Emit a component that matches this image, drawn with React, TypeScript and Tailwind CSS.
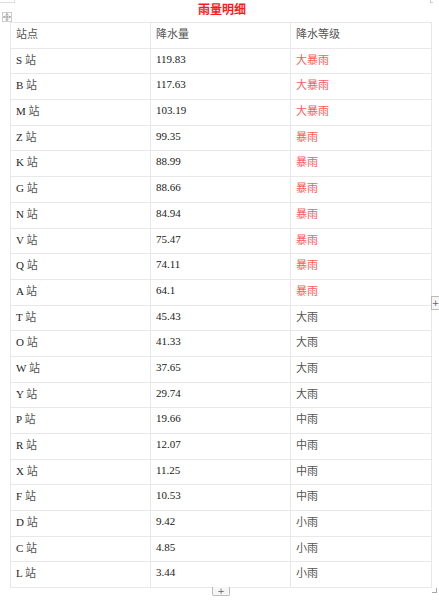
const rows: [string, string, string][] = [
  ["S", "119.83", "大暴雨"],
  ["B", "117.63", "大暴雨"],
  ["M", "103.19", "大暴雨"],
  ["Z", "99.35", "暴雨"],
  ["K", "88.99", "暴雨"],
  ["G", "88.66", "暴雨"],
  ["N", "84.94", "暴雨"],
  ["V", "75.47", "暴雨"],
  ["Q", "74.11", "暴雨"],
  ["A", "64.1", "暴雨"],
  ["T", "45.43", "大雨"],
  ["O", "41.33", "大雨"],
  ["W", "37.65", "大雨"],
  ["Y", "29.74", "大雨"],
  ["P", "19.66", "中雨"],
  ["R", "12.07", "中雨"],
  ["X", "11.25", "中雨"],
  ["F", "10.53", "中雨"],
  ["D", "9.42", "小雨"],
  ["C", "4.85", "小雨"],
  ["L", "3.44", "小雨"],
];

const serif = "font-['Liberation_Serif','Noto_Sans_CJK_SC',serif]";
const cjk = "font-['Noto_Sans_CJK_SC',sans-serif]";

function MoveIcon() {
  return (
    <svg width="10" height="10" viewBox="0 0 10 10" className="block">
      <rect x="0.5" y="0.5" width="9" height="9" fill="#fff" stroke="#ccc" />
      <path d="M5 1.5v7M1.5 5h7" stroke="#888" strokeWidth="0.8" />
      <path d="M5 1.5l-1.3 1.3M5 1.5l1.3 1.3M5 8.5l-1.3-1.3M5 8.5l1.3-1.3M1.5 5l1.3-1.3M1.5 5l1.3 1.3M8.5 5l-1.3-1.3M8.5 5l-1.3 1.3" stroke="#888" strokeWidth="0.8" fill="none" />
    </svg>
  );
}

export default function App() {
  const cell = "border border-[#e8e8e8] align-top h-[25.7px] pl-[5px] pt-[3px] text-[11px] leading-[14px]";
  return (
    <div className="relative w-[439px] h-[600px] bg-white overflow-hidden">
      <div className="absolute left-0 top-0 w-[15px] h-[3px] border-r border-b border-[#ddd]" />
      <div className="absolute right-[6px] top-0 w-[3px] h-[3px] border-l border-b border-[#ccc]" />
      <div className={`h-[22px] flex justify-center pt-[1px] pl-[5px] text-[12px] leading-[16px] font-bold text-[#ff1a1a] ${cjk}`}>
        雨量明细
      </div>
      <div className="absolute left-[2px] top-[12px]">
        <MoveIcon />
      </div>
      <div className="pl-[10px]">
        <table className="border-collapse table-fixed w-[421px]">
          <colgroup>
            <col className="w-[140px]" />
            <col className="w-[140px]" />
            <col className="w-[141px]" />
          </colgroup>
          <thead>
            <tr>
              <td className={`${cell} ${cjk} text-[#555]`}>站点</td>
              <td className={`${cell} ${cjk} text-[#555]`}>降水量</td>
              <td className={`${cell} ${cjk} text-[#555]`}>降水等级</td>
            </tr>
          </thead>
          <tbody>
            {rows.map(([s, v, lvl]) => (
              <tr key={s}>
                <td className={`${cell} ${serif} text-[#1f1f1f]`}>
                  {s} <span className={`${cjk} text-[#555]`}>站</span>
                </td>
                <td className={`${cell} ${serif} text-[#1a1a1a]`}>{v}</td>
                <td
                  className={`${cell} ${cjk} ${
                    lvl.includes("暴") ? "text-[#ff5c5c]" : "text-[#555]"
                  }`}
                >
                  {lvl}
                </td>
              </tr>
            ))}
          </tbody>
        </table>
      </div>
      <div className="absolute right-0 top-[296px] w-[8px] h-[14px] border border-r-0 border-[#bbb] bg-[#f6f6f6] flex items-center justify-center text-[9px] leading-none text-[#666] font-['DejaVu_Sans',sans-serif]">
        +
      </div>
      <div className="absolute left-[212px] top-[587px] w-[18px] h-[9px] border border-t-0 border-[#bbb] bg-[#f6f6f6] rounded-b-[2px] flex items-center justify-center text-[9px] leading-none text-[#666] font-['DejaVu_Sans',sans-serif]">
        +
      </div>
      <div className="absolute left-[432px] top-[588px] w-[5px] h-[5px] border-r border-b border-[#aaa]" />
    </div>
  );
}
